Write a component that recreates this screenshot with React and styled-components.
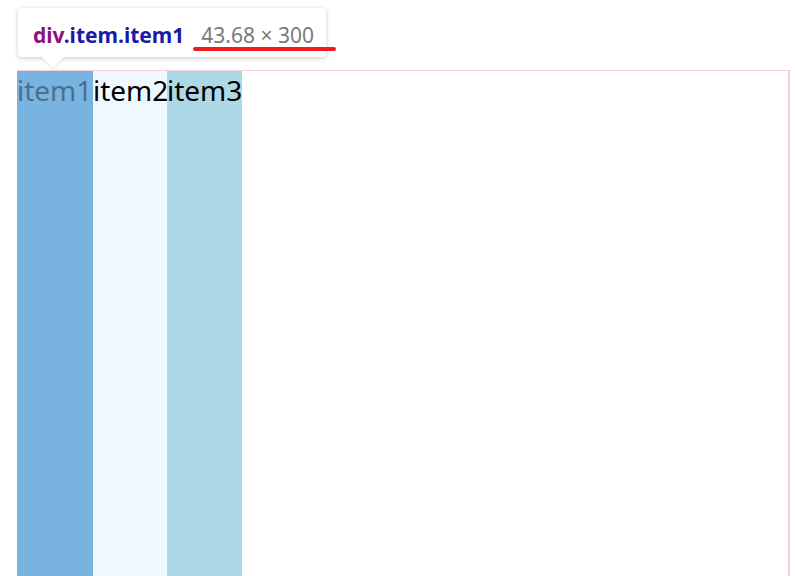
import styled, { createGlobalStyle } from 'styled-components'

const GlobalStyle = createGlobalStyle`
  html, body {
    margin: 0;
    padding: 0;
    background: #ffffff;
    overflow: hidden;
  }
`;

const Page = styled.div`
  position: relative;
  width: 796px;
  height: 576px;
  padding: 70px 0 0 17px;
  box-sizing: border-box;
  overflow: hidden;
  font-family: "Noto Sans", "Open Sans", sans-serif;
`;

const Container = styled.div`
  display: flex;
  width: 773px;
  height: 540px;
  border: 1px solid #f2cfdc;
  border-right-width: 2px;
  border-left: none;
  box-sizing: border-box;
`;

const Item = styled.div`
  width: ${p => p.w}px;
  background: ${p => p.bg};
  color: ${p => p.fg || '#000'};
  font-size: 28px;
  line-height: 38px;
  letter-spacing: 0;
  white-space: nowrap;
`;

const Tooltip = styled.div`
  position: absolute;
  left: 18px;
  top: 8px;
  width: 308px;
  height: 49px;
  box-sizing: border-box;
  padding: 4px 0 0 15px;
  display: flex;
  align-items: center;
  gap: 17px;
  background: #ffffff;
  border-radius: 4px;
  box-shadow: 0 1px 5px rgba(0, 0, 0, 0.22);

  &::after {
    content: '';
    position: absolute;
    left: 24px;
    bottom: -11px;
    border-left: 11px solid transparent;
    border-right: 11px solid transparent;
    border-top: 11px solid #ffffff;
    filter: drop-shadow(0 2px 1px rgba(0, 0, 0, 0.08));
  }
`;

const Selector = styled.span`
  font-size: 21px;
  font-weight: 700;
  color: #1a1aa6;
`;

const Tag = styled.span`
  color: #881280;
`;

const Size = styled.span`
  font-size: 21px;
  color: #7a7a7a;
`;

const Underline = styled.div`
  position: absolute;
  left: 193px;
  top: 47px;
  width: 143px;
  height: 4px;
  border-radius: 2px;
  background: #ee1c1c;
`;

const App = () => {
  return (
    <Page>
      <GlobalStyle />
      <Container>
        <Item w={76} bg="#79b4e0" fg="#4b6f8c">item1</Item>
        <Item w={74} bg="#f0f8ff">item2</Item>
        <Item w={75} bg="#add8e6">item3</Item>
      </Container>
      <Tooltip>
        <Selector><Tag>div</Tag>.item.item1</Selector>
        <Size>43.68 × 300</Size>
      </Tooltip>
      <Underline />
    </Page>
  )
}

export default App;
